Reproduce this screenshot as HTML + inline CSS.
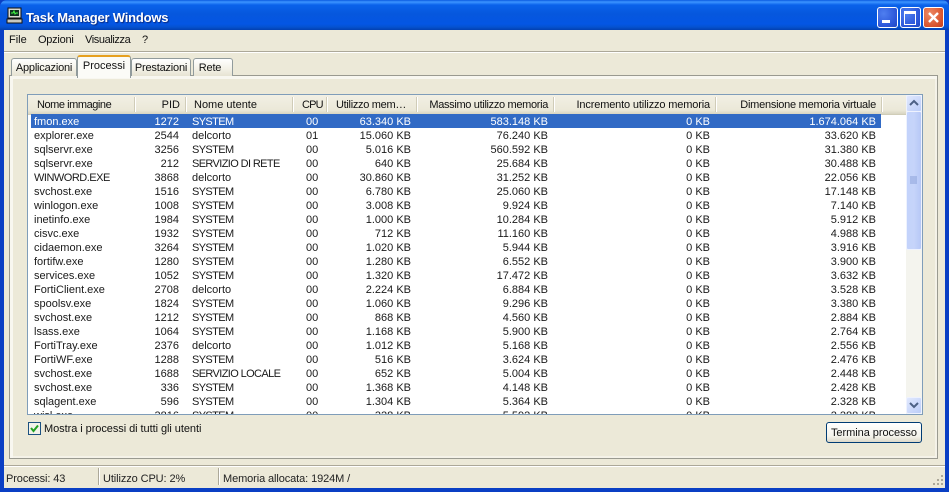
<!DOCTYPE html>
<html><head><meta charset="utf-8"><style>
html,body{margin:0;padding:0;background:#0a3fc4}
body{width:949px;height:492px;position:relative;overflow:hidden;font:11px/14px "Liberation Sans",sans-serif;color:#111}
div,span{position:absolute;white-space:nowrap}
#tb{left:0;top:0;width:949px;height:30px;border-radius:7px 7px 0 0;background:linear-gradient(#0a5ae0 0,#3d95ff 2px,#0a62ea 5px,#0657dd 14px,#0456e4 24px,#0552d0 27px,#0340b0 30px)}
#title{left:26px;top:10px;font:bold 13px/16px "Liberation Sans",sans-serif;color:#fff;text-shadow:1px 1px 1px #0a2a80;letter-spacing:-.2px}
.wb{top:7px;width:19px;height:19px;border:1px solid #fff;border-radius:3px;background:radial-gradient(circle at 30% 30%,#4f7ff0,#2a55d8 70%,#2348c0)}
#main{left:4px;top:30px;width:941px;height:458px;background:#ece9d8}
.m{top:33px;font-size:11px;color:#111}
#sep{left:4px;top:51px;width:941px;height:1px;background:#aca899;border-bottom:1px solid #fff}
#panel{left:9px;top:75px;width:927px;height:382px;border:1px solid #9a9a90;background:#ece9d8;box-shadow:inset 3px 3px 0 #f8f7f0,inset -2px -2px 0 #f4f2e8}
.tab{top:58px;height:17px;background:linear-gradient(#fff,#f3f1e6 60%,#e6e3d2);border:1px solid #919b9c;border-bottom:0;border-radius:3px 3px 0 0;text-align:center;line-height:18px;color:#111;letter-spacing:-.2px}
#active{left:77px;top:55px;width:52px;height:21px;background:#fbfbf7;border:1px solid #919b9c;border-top:2px solid #e6a020;border-bottom:0;border-radius:3px 3px 0 0;text-align:center;line-height:18px;margin:0;z-index:2;box-sizing:content-box}
#list{left:27px;top:94px;width:896px;height:321px;background:#fff;border:1px solid #7f9db9;box-sizing:border-box;overflow:hidden}
#hd{left:0;top:0;width:878px;height:19px;background:linear-gradient(#f2f0e4,#ebe8d8 80%,#d8d5c2);border-bottom:1px solid #d0cdb8}
.h{top:3px;color:#111}
.s{top:2px;width:1px;height:15px;background:#d0ccb8;border-right:1px solid #fff}
table{position:absolute;left:3px;top:19px;border-collapse:collapse;table-layout:fixed;width:850px}
tr{height:14px}
td{padding:2px 0 0 0;height:14px;line-height:12px;font-size:11px;overflow:hidden;white-space:nowrap;color:#1a1a1a;box-sizing:border-box}
td:nth-child(1){width:103px;padding-left:3px}
td:nth-child(2){width:51px;text-align:right;padding-right:6px}
td:nth-child(3){width:113px;padding-left:7px;letter-spacing:-.62px}
td.d{letter-spacing:0 !important}
td:nth-child(4){width:28px;padding-left:8px}
td:nth-child(5){width:90px;text-align:right;padding-right:5px}
td:nth-child(6){width:137px;text-align:right;padding-right:5px}
td:nth-child(7){width:162px;text-align:right;padding-right:5px}
td:nth-child(8){width:166px;text-align:right;padding-right:5px}
tr.sel td{background:#316ac5;color:#fff}
#sb{left:906px;top:95px;width:16px;height:319px;background:#f4f4ee}
#thumb{left:906px;top:111px;width:16px;height:139px;background:linear-gradient(90deg,#c3d3fb,#c6d4fa 50%,#b6c8f6);border:1px solid #eef2fe;border-radius:2px;box-sizing:border-box}
.sbtn{left:906px;width:16px;height:17px;background:linear-gradient(135deg,#e0e8fe,#bccdf8);border:1px solid #eef2fe;border-radius:2px;box-sizing:border-box}
#cb{left:28px;top:422px;width:13px;height:13px;border:1px solid #1c5180;background:#f2f2ea;box-sizing:border-box}
#btn{left:826px;top:422px;width:96px;height:21px;border:1px solid #003c74;border-radius:3px;background:linear-gradient(#fff,#f4f3ec 70%,#dcd8c8);box-sizing:border-box;text-align:center;line-height:20px;color:#111;letter-spacing:-.05px}
.st{top:472px;color:#222;letter-spacing:-.1px}
.sv{top:468px;width:1px;height:17px;background:#aca899;border-right:1px solid #fff}
</style></head><body>
<div id="tb"></div>
<svg style="position:absolute;left:6px;top:7px" width="18" height="18" viewBox="0 0 18 18"><rect x="2" y="1" width="13" height="10" fill="#d8d8d0" stroke="#111"/><rect x="4" y="3" width="9" height="6" fill="#103020"/><path d="M5 6h2l1-2 1 3 1-1h2" stroke="#4f4" fill="none"/><rect x="1" y="12" width="15" height="4" fill="#c8c8c0" stroke="#111"/></svg>
<div id="title">Task Manager Windows</div>
<div class="wb" style="left:877px"></div>
<div style="left:882px;top:20px;width:8px;height:3px;background:#fff"></div>
<div class="wb" style="left:900px"></div>
<div style="left:904px;top:11px;width:10px;height:10px;border:1px solid #fff;border-top:3px solid #fff"></div>
<div class="wb" style="left:923px;background:radial-gradient(circle at 30% 30%,#ee8a66,#d9532c 70%,#c04020)"></div>
<svg style="position:absolute;left:924px;top:8px" width="19" height="19"><path d="M5 5L14 14M14 5L5 14" stroke="#fff" stroke-width="2.4"/></svg>
<div id="main"></div>
<div class="m" style="left:9px">File</div>
<div class="m" style="left:38px;letter-spacing:-.25px">Opzioni</div>
<div class="m" style="left:85px;letter-spacing:-.4px">Visualizza</div>
<div class="m" style="left:142px">?</div>
<div id="sep"></div>
<div id="panel"></div>
<div class="tab" style="left:11px;width:64px">Applicazioni</div>
<div class="tab" style="left:131px;width:58px">Prestazioni</div>
<div class="tab" style="left:193px;width:38px;text-indent:-6px">Rete</div>
<div id="active">Processi</div>
<div id="list">
<div id="hd"></div>
<div class="h" style="left:9px;letter-spacing:-.45px">Nome immagine</div>
<div class="s" style="left:106px"></div>
<div class="h" style="left:106px;width:46px;text-align:right">PID</div>
<div class="s" style="left:157px"></div>
<div class="h" style="left:166px">Nome utente</div>
<div class="s" style="left:264px"></div>
<div class="h" style="left:274px;letter-spacing:-.8px">CPU</div>
<div class="s" style="left:298px"></div>
<div class="h" style="left:308px;letter-spacing:-.3px">Utilizzo mem…</div>
<div class="s" style="left:388px"></div>
<div class="h" style="left:388px;width:132px;text-align:right;letter-spacing:-.33px">Massimo utilizzo memoria</div>
<div class="s" style="left:525px"></div>
<div class="h" style="left:525px;width:157px;text-align:right;letter-spacing:-.15px">Incremento utilizzo memoria</div>
<div class="s" style="left:687px"></div>
<div class="h" style="left:687px;width:161px;text-align:right;letter-spacing:-.25px">Dimensione memoria virtuale</div>
<div class="s" style="left:853px"></div>
<table>
<tr class="sel"><td>fmon.exe</td><td>1272</td><td>SYSTEM</td><td>00</td><td>63.340 KB</td><td>583.148 KB</td><td>0 KB</td><td>1.674.064 KB</td></tr>
<tr><td>explorer.exe</td><td>2544</td><td class="d">delcorto</td><td>01</td><td>15.060 KB</td><td>76.240 KB</td><td>0 KB</td><td>33.620 KB</td></tr>
<tr><td>sqlservr.exe</td><td>3256</td><td>SYSTEM</td><td>00</td><td>5.016 KB</td><td>560.592 KB</td><td>0 KB</td><td>31.380 KB</td></tr>
<tr><td>sqlservr.exe</td><td>212</td><td>SERVIZIO DI RETE</td><td>00</td><td>640 KB</td><td>25.684 KB</td><td>0 KB</td><td>30.488 KB</td></tr>
<tr><td style="letter-spacing:-.5px">WINWORD.EXE</td><td>3868</td><td class="d">delcorto</td><td>00</td><td>30.860 KB</td><td>31.252 KB</td><td>0 KB</td><td>22.056 KB</td></tr>
<tr><td>svchost.exe</td><td>1516</td><td>SYSTEM</td><td>00</td><td>6.780 KB</td><td>25.060 KB</td><td>0 KB</td><td>17.148 KB</td></tr>
<tr><td>winlogon.exe</td><td>1008</td><td>SYSTEM</td><td>00</td><td>3.008 KB</td><td>9.924 KB</td><td>0 KB</td><td>7.140 KB</td></tr>
<tr><td>inetinfo.exe</td><td>1984</td><td>SYSTEM</td><td>00</td><td>1.000 KB</td><td>10.284 KB</td><td>0 KB</td><td>5.912 KB</td></tr>
<tr><td>cisvc.exe</td><td>1932</td><td>SYSTEM</td><td>00</td><td>712 KB</td><td>11.160 KB</td><td>0 KB</td><td>4.988 KB</td></tr>
<tr><td>cidaemon.exe</td><td>3264</td><td>SYSTEM</td><td>00</td><td>1.020 KB</td><td>5.944 KB</td><td>0 KB</td><td>3.916 KB</td></tr>
<tr><td>fortifw.exe</td><td>1280</td><td>SYSTEM</td><td>00</td><td>1.280 KB</td><td>6.552 KB</td><td>0 KB</td><td>3.900 KB</td></tr>
<tr><td>services.exe</td><td>1052</td><td>SYSTEM</td><td>00</td><td>1.320 KB</td><td>17.472 KB</td><td>0 KB</td><td>3.632 KB</td></tr>
<tr><td>FortiClient.exe</td><td>2708</td><td class="d">delcorto</td><td>00</td><td>2.224 KB</td><td>6.884 KB</td><td>0 KB</td><td>3.528 KB</td></tr>
<tr><td>spoolsv.exe</td><td>1824</td><td>SYSTEM</td><td>00</td><td>1.060 KB</td><td>9.296 KB</td><td>0 KB</td><td>3.380 KB</td></tr>
<tr><td>svchost.exe</td><td>1212</td><td>SYSTEM</td><td>00</td><td>868 KB</td><td>4.560 KB</td><td>0 KB</td><td>2.884 KB</td></tr>
<tr><td>lsass.exe</td><td>1064</td><td>SYSTEM</td><td>00</td><td>1.168 KB</td><td>5.900 KB</td><td>0 KB</td><td>2.764 KB</td></tr>
<tr><td>FortiTray.exe</td><td>2376</td><td class="d">delcorto</td><td>00</td><td>1.012 KB</td><td>5.168 KB</td><td>0 KB</td><td>2.556 KB</td></tr>
<tr><td>FortiWF.exe</td><td>1288</td><td>SYSTEM</td><td>00</td><td>516 KB</td><td>3.624 KB</td><td>0 KB</td><td>2.476 KB</td></tr>
<tr><td>svchost.exe</td><td>1688</td><td>SERVIZIO LOCALE</td><td>00</td><td>652 KB</td><td>5.004 KB</td><td>0 KB</td><td>2.448 KB</td></tr>
<tr><td>svchost.exe</td><td>336</td><td>SYSTEM</td><td>00</td><td>1.368 KB</td><td>4.148 KB</td><td>0 KB</td><td>2.428 KB</td></tr>
<tr><td>sqlagent.exe</td><td>596</td><td>SYSTEM</td><td>00</td><td>1.304 KB</td><td>5.364 KB</td><td>0 KB</td><td>2.328 KB</td></tr>
<tr><td>wisl.exe</td><td>3816</td><td>SYSTEM</td><td>00</td><td>328 KB</td><td>5.592 KB</td><td>0 KB</td><td>2.288 KB</td></tr>
</table>
</div>
<div id="sb"></div>
<div class="sbtn" style="top:95px"></div>
<svg style="position:absolute;left:906px;top:95px" width="16" height="17"><path d="M4 10L8 6L12 10" stroke="#4d6185" stroke-width="2" fill="none"/></svg>
<div id="thumb"></div>
<svg style="position:absolute;left:910px;top:176px" width="8" height="8"><path d="M0 1h7M0 3h7M0 5h7M0 7h7" stroke="#8aa0d8"/></svg>
<div class="sbtn" style="top:397px"></div>
<svg style="position:absolute;left:906px;top:397px" width="16" height="17"><path d="M4 6L8 10L12 6" stroke="#4d6185" stroke-width="2" fill="none"/></svg>
<div id="cb"></div>
<svg style="position:absolute;left:28px;top:422px" width="13" height="13"><path d="M3 6L5.5 9L10 3.5" stroke="#21a121" stroke-width="2" fill="none"/></svg>
<div style="left:44px;top:422px;letter-spacing:-.06px">Mostra i processi di tutti gli utenti</div>
<div id="btn">Termina processo</div>
<div style="left:4px;top:465px;width:941px;height:1px;background:#aca899;border-bottom:1px solid #fff"></div>
<div class="st" style="left:6px">Processi: 43</div>
<div class="sv" style="left:98px"></div>
<div class="st" style="left:103px">Utilizzo CPU: 2%</div>
<div class="sv" style="left:218px"></div>
<div class="st" style="left:223px">Memoria allocata: 1924M /</div>
<svg style="position:absolute;left:932px;top:474px" width="13" height="13"><g fill="#aca899"><rect x="9" y="1" width="2" height="2"/><rect x="5" y="5" width="2" height="2"/><rect x="9" y="5" width="2" height="2"/><rect x="1" y="9" width="2" height="2"/><rect x="5" y="9" width="2" height="2"/><rect x="9" y="9" width="2" height="2"/></g></svg>
</body></html>
